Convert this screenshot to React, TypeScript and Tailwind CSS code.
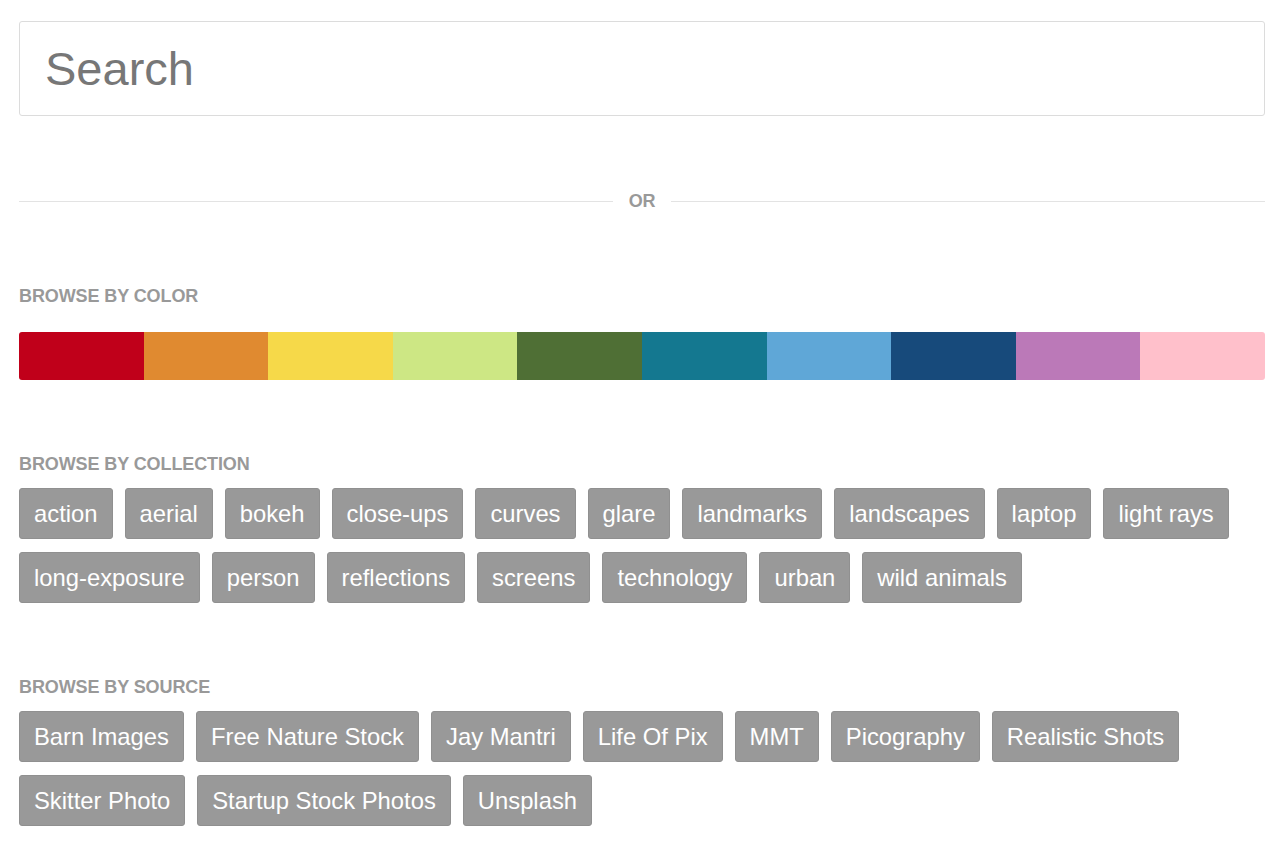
const colors = [
  '#c0001a',
  '#e08a30',
  '#f6d949',
  '#cde784',
  '#4f6f35',
  '#147890',
  '#5fa7d7',
  '#174a7b',
  '#bb79b8',
  '#ffc0cb',
];

const collections = [
  'action', 'aerial', 'bokeh', 'close-ups', 'curves', 'glare', 'landmarks', 'landscapes',
  'laptop', 'light rays', 'long-exposure', 'person', 'reflections', 'screens', 'technology',
  'urban', 'wild animals',
];

const sources = [
  'Barn Images', 'Free Nature Stock', 'Jay Mantri', 'Life Of Pix', 'MMT', 'Picography',
  'Realistic Shots', 'Skitter Photo', 'Startup Stock Photos', 'Unsplash',
];

function Heading({ children }: { children: string }) {
  return (
    <h2 className="text-[18px] leading-5 font-bold text-[#999] uppercase tracking-[-0.1px]">
      {children}
    </h2>
  );
}

function Tags({ items }: { items: string[] }) {
  return (
    <div className="flex flex-wrap gap-x-3 gap-y-[13px] mt-[14px]">
      {items.map(t => (
        <a
          key={t}
          href="#"
          className="h-[51px] px-[14px] flex items-center rounded-[3px] border border-[#909090] bg-[#999] text-white text-[23.8px] leading-none"
        >
          {t}
        </a>
      ))}
    </div>
  );
}

export default function App() {
  return (
    <div className="min-h-screen bg-white px-[19px] pt-[21px] pb-10 font-['Liberation_Sans',Arial,sans-serif] w-[1284px]">
      <input
        type="text"
        placeholder="Search"
        className="w-full h-[95px] border border-[#dcdcdc] rounded-[3px] px-[25px] text-[47px] text-[#555] placeholder:text-[#777] outline-none"
      />

      <div className="flex items-center mt-[75px] h-5">
        <div className="flex-1 h-px bg-[#e3e3e3]" />
        <span className="px-4 text-[18px] font-bold text-[#999] tracking-[-0.3px]">OR</span>
        <div className="flex-1 h-px bg-[#e3e3e3]" />
      </div>

      <div className="mt-[75px]">
        <Heading>Browse by color</Heading>
        <div className="mt-[26px] flex h-[48px] rounded-[3px] overflow-hidden">
          {colors.map(c => (
            <a key={c} href="#" className="flex-1" style={{ backgroundColor: c }} />
          ))}
        </div>
      </div>

      <div className="mt-[74px]">
        <Heading>Browse by collection</Heading>
        <Tags items={collections} />
      </div>

      <div className="mt-[74px]">
        <Heading>Browse by source</Heading>
        <Tags items={sources} />
      </div>
    </div>
  );
}
